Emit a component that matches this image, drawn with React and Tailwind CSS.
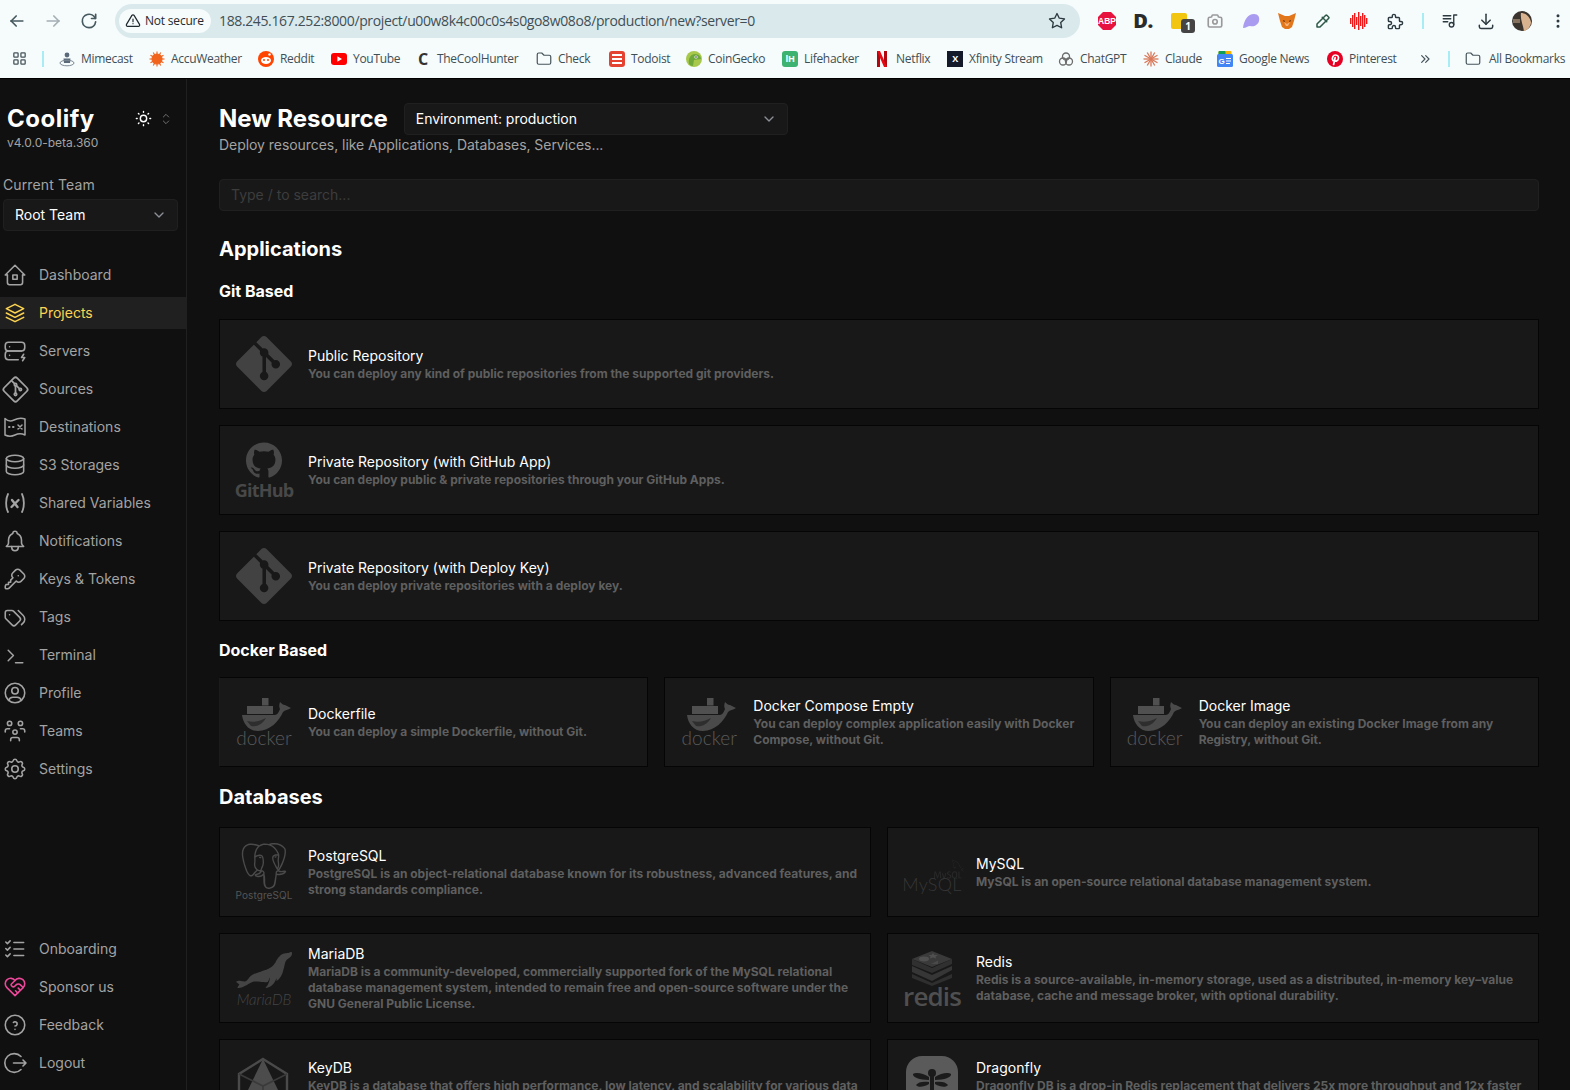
import React from "react";
import {
  TbHome2, TbStack2, TbServerBolt, TbBrandGit, TbDatabase, TbBell, TbKey, TbTags,
  TbTerminal, TbUserCircle, TbUsersGroup, TbSettings, TbListCheck, TbHeartHandshake, TbHelpCircle,
  TbSun, TbSelector, TbChevronDown, TbColorPicker, TbPuzzle, TbPlaylist, TbDownload, TbDotsVertical,
  TbArrowLeft, TbArrowRight, TbReload, TbAlertTriangle, TbStar, TbLayoutGrid, TbFolder, TbChevronsRight, TbCamera,
} from "react-icons/tb";
import { SiGit, SiGithub, SiPostgresql, SiMariadb, SiMysql } from "react-icons/si";

const Logout = () => (
  <svg width="24" height="24" viewBox="0 0 24 24" fill="none" stroke="currentColor" strokeWidth="1.6" strokeLinecap="round" strokeLinejoin="round">
    <path d="M18 5.5A9.4 9.4 0 1 0 18 18.5" />
    <path d="M10.5 12h12.5M20 9l3 3-3 3" />
  </svg>
);
const MapX = () => (
  <svg width="24" height="24" viewBox="0 0 24 24" fill="none" stroke="currentColor" strokeWidth="1.5" strokeLinecap="round" strokeLinejoin="round">
    <path d="M2 3.5C5 6.5 8 6.5 11 5C14 3.5 18 2.5 22 4V20C18 18 15 18.5 12 20C9 21.5 5 21.5 2 20Z" />
    <path d="M15 10l4 4M19 10l-4 4" />
    <path d="M6 12h.5M10 12h.5" strokeWidth="2" />
  </svg>
);
const VarX = () => (
  <svg width="24" height="24" viewBox="0 0 24 24" fill="none" stroke="currentColor" strokeLinecap="round" strokeLinejoin="round">
    <path strokeWidth="1.8" d="M5 3C2.5 8 2.5 16 5 21M19 3C21.5 8 21.5 16 19 21" />
    <path strokeWidth="2.4" d="M9 9L14.5 16M15.5 9L8.5 16" />
  </svg>
);

const navTop = [
  ["Dashboard", TbHome2, 26],
  ["Projects", TbStack2, 26, true],
  ["Servers", TbServerBolt, 26],
  ["Sources", TbBrandGit, 29],
  ["Destinations", MapX, 24],
  ["S3 Storages", TbDatabase, 26],
  ["Shared Variables", VarX, 24],
  ["Notifications", TbBell, 26],
  ["Keys & Tokens", TbKey, 26],
  ["Tags", TbTags, 26],
  ["Terminal", TbTerminal, 25],
  ["Profile", TbUserCircle, 26],
  ["Teams", TbUsersGroup, 26],
  ["Settings", TbSettings, 26],
];

function NavItem({ label, Icon, active, pink, size = 26 }) {
  return (
    <div className={`flex h-8 items-center pl-[3px] text-sm ${active ? "bg-[#202020] text-[#fcd452]" : "text-[#a3a3a3]"}`}>
      <span className={`flex w-6 justify-center overflow-visible ${pink ? "text-[#ec4899]" : ""}`}>
        <span className="shrink-0">
          <Icon size={size} strokeWidth={1.45} />
        </span>
      </span>
      <span className="ml-3">{label}</span>
    </div>
  );
}

const Sidebar = () => (
  <aside className="flex h-full w-[187px] shrink-0 flex-col border-r border-[#202020] bg-[#101010] pb-[11px]">
    <div className="flex items-start justify-between pl-[7px] pr-[12px] pt-[24px]">
      <div>
        <div className="text-2xl leading-8 font-bold tracking-[0.5px] text-white">Coolify</div>
        <div className="text-xs leading-4 text-[#a3a3a3]">v4.0.0-beta.360</div>
      </div>
      <div className="flex items-center gap-[5px] pt-[6px]">
        <TbSun size={19} className="text-white" strokeWidth={1.8} />
        <TbSelector size={16} className="text-[#777]" strokeWidth={1.4} />
      </div>
    </div>
    <div className="mt-[24px] pl-[3px] text-sm leading-5 tracking-[0.12px] text-[#a3a3a3]">Current Team</div>
    <div className="mx-[3px] mt-[4px] flex h-8 w-[175px] items-center justify-between rounded border border-[#202020] bg-[#181818] pl-[11px] pr-[10px] text-sm text-white">
      <span>Root Team</span>
      <TbChevronDown size={16} className="text-[#8a8f98]" strokeWidth={2} />
    </div>
    <nav className="mt-[28px] flex flex-col gap-[6px]">
      {navTop.map(([l, I, s, a]) => <NavItem key={l} label={l} Icon={I} size={s} active={a} />)}
    </nav>
    <nav className="mt-auto flex flex-col gap-[6px]">
      <NavItem label="Onboarding" Icon={TbListCheck} />
      <NavItem label="Sponsor us" Icon={TbHeartHandshake} pink />
      <NavItem label="Feedback" Icon={TbHelpCircle} />
      <NavItem label="Logout" Icon={Logout} size={24} />
    </nav>
  </aside>
);

const GitLogo = () => <SiGit size={56} className="text-[#424242]" />;
const GithubLogo = () => (
  <div className="flex flex-col items-center text-[#484848]">
    <SiGithub size={36} />
    <span className="mt-[3px] text-[18px] leading-[18px] font-bold tracking-[-0.8px] font-[family-name:'Open_Sans',sans-serif]">GitHub</span>
  </div>
);
const DockerLogo = () => (
  <div className="flex h-14 flex-col items-center">
    <svg width="56" height="37" viewBox="0 0 56 37" className="shrink-0">
      <g fill="#505050">
        <rect x="26" y="4" width="6.5" height="7.5" />
        <rect x="11" y="12" width="26" height="8" />
      </g>
      <path fill="#4a4a4a" d="M6 21H39C41 21 43 18 44 15C43 13 43 11 44 8C46 10 47 11 49 11L55 14C52 16 49 16 47 18C43 27 34 37 22 37C12 37 7 29 6 21Z" />
      <path fill="#2e2e2e" d="M11 27C18 29 24 27 30 24C26 31 20 33 15 32Z" />
    </svg>
    <span className="mt-[-1px] text-[19px] leading-[16px] font-light tracking-[0.1px] text-[#5a5a5a] font-[family-name:Lato,sans-serif]">docker</span>
  </div>
);
const PgLogo = () => (
  <div className="flex flex-col items-center">
    <SiPostgresql size={46} className="text-[#4a4a4a]" />
    <span className="text-[10px] leading-[12px] tracking-[0.1px] text-[#555]">PostgreSQL</span>
  </div>
);
const MysqlLogo = () => (
  <div className="mt-[4px] flex flex-col items-center">
    <SiMysql size={30} className="mb-[-10px] ml-[34px] text-[#282828]" />
    <span className="text-[18px] leading-[18px] font-light tracking-[0.3px] text-[#363636] font-[family-name:Lato,sans-serif]">MySQL</span>
  </div>
);
const MariaLogo = () => (
  <div className="flex flex-col items-center">
    <SiMariadb size={56} className="my-[-8px] text-[#444]" />
    <span className="mt-[2px] text-[15px] leading-[14px] font-light italic text-[#454545] font-[family-name:Lato,sans-serif]">MariaDB</span>
  </div>
);
const RedisLogo = () => (
  <div className="flex h-14 flex-col items-center">
    <svg width="42" height="36" viewBox="0 0 42 36" className="shrink-0">
      <path fill="#2f2f2f" d="M1 24L21 33L41 24V28L21 36L1 28Z" />
      <path fill="#363636" d="M1 16L21 25L41 16V20L21 31L1 22Z" />
      <path fill="#303030" d="M1 9L21 18L41 9V14L21 23L1 15Z" />
      <path fill="#3a3a3a" d="M21 1L41 9L21 17L1 9Z" />
      <ellipse cx="13" cy="9" rx="5" ry="2.4" fill="#505050" />
      <path fill="#505050" d="M22 3L23.5 5H27L24.5 6.5L25 8.5L22 7.5L19 8.5L19.5 6.5L17.5 5H20.5Z" />
      <path fill="#4a4a4a" d="M20 14L27 10.5L27 14Z" />
    </svg>
    <span className="text-[26px] leading-[20px] font-semibold tracking-[-0.9px] text-[#4f4f4f] font-[family-name:'Open_Sans',sans-serif]">redis</span>
  </div>
);
const KeyLogo = () => (
  <svg width="56" height="56" viewBox="0 0 56 56">
    <path fill="none" stroke="#4a4a4a" strokeWidth="2.4" d="M27 3L51 18V44L27 55L3 44V18Z" />
    <path fill="#4c4c4c" d="M27 3L43 36L27 46L11 36Z" />
    <path fill="none" stroke="#3a3a3a" strokeWidth="1.6" d="M3 18L27 30L51 18M27 30V55" />
  </svg>
);
const DragonLogo = () => (
  <div className="flex h-14 w-[52px] items-center justify-center rounded-[16px] bg-[#5a5a5a]">
    <svg width="40" height="30" viewBox="0 0 40 30" fill="#1b1b1b">
      <circle cx="20" cy="4" r="4" />
      <rect x="18" y="6" width="4" height="24" rx="2" />
      <path d="M17 8C11 4 4 3 1 5C0 8 8 11 17 11Z" />
      <path d="M23 8C29 4 36 3 39 5C40 8 32 11 23 11Z" />
      <path d="M17 13C11 12 6 13 4 16C6 19 12 18 17 15Z" />
      <path d="M23 13C29 12 34 13 36 16C34 19 28 18 23 15Z" />
    </svg>
  </div>
);

function Card({ logo, title, desc, className = "" }) {
  return (
    <div className={`flex h-[90px] items-center gap-4 border border-[#050505] bg-[#181818] pl-4 pr-2 ${className}`}>
      <div className="flex h-14 w-14 shrink-0 items-center justify-center">{logo}</div>
      <div className="min-w-0">
        <div className="text-sm leading-5 text-white">{title}</div>
        <div className="text-xs leading-4 font-bold text-[#5f5f5f]">{desc}</div>
      </div>
    </div>
  );
}

const Main = () => (
  <main className="h-full min-w-0 flex-1 overflow-hidden bg-[#101010] pl-8 pr-[31px] pt-6">
    <div className="flex items-center gap-4">
      <h1 className="text-2xl font-bold text-white">New Resource</h1>
      <div className="flex h-8 w-[384px] items-center justify-between rounded border border-[#202020] bg-[#181818] pl-[11px] pr-[10px] text-sm tracking-[-0.05px] text-white">
        <span>Environment: production</span>
        <TbChevronDown size={16} className="text-[#8a8f98]" strokeWidth={2} />
      </div>
    </div>
    <p className="text-sm leading-5 tracking-[-0.05px] text-[#a3a3a3]">Deploy resources, like Applications, Databases, Services...</p>
    <div className="mt-6 flex h-8 items-center rounded border border-[#202020] bg-[#181818] pl-[11px] text-sm text-[#3d3d3d]">Type / to search...</div>
    <h2 className="mt-[24px] text-xl leading-7 font-bold text-white">Applications</h2>
    <h3 className="mt-[16px] text-base leading-6 font-bold text-white">Git Based</h3>
    <div className="mt-[16px] flex flex-col gap-4">
      <Card logo={<GitLogo />} title="Public Repository" desc="You can deploy any kind of public repositories from the supported git providers." />
      <Card logo={<GithubLogo />} title="Private Repository (with GitHub App)" desc="You can deploy public & private repositories through your GitHub Apps." />
      <Card logo={<GitLogo />} title="Private Repository (with Deploy Key)" desc="You can deploy private repositories with a deploy key." />
    </div>
    <h3 className="mt-[17px] text-base leading-6 font-bold text-white">Docker Based</h3>
    <div className="mt-[15px] grid grid-cols-3 gap-4">
      <Card className="border-l-[#1a1440]" logo={<DockerLogo />} title="Dockerfile" desc="You can deploy a simple Dockerfile, without Git." />
      <Card logo={<DockerLogo />} title="Docker Compose Empty" desc="You can deploy complex application easily with Docker Compose, without Git." />
      <Card logo={<DockerLogo />} title="Docker Image" desc="You can deploy an existing Docker Image from any Registry, without Git." />
    </div>
    <h2 className="mt-[16px] text-xl leading-7 font-bold text-white">Databases</h2>
    <div className="mt-[16px] grid grid-cols-2 gap-4">
      <Card logo={<PgLogo />} title="PostgreSQL" desc="PostgreSQL is an object-relational database known for its robustness, advanced features, and strong standards compliance." />
      <Card logo={<MysqlLogo />} title="MySQL" desc="MySQL is an open-source relational database management system." />
      <Card logo={<MariaLogo />} title="MariaDB" desc="MariaDB is a community-developed, commercially supported fork of the MySQL relational database management system, intended to remain free and open-source software under the GNU General Public License." />
      <Card logo={<RedisLogo />} title="Redis" desc="Redis is a source-available, in-memory storage, used as a distributed, in-memory key–value database, cache and message broker, with optional durability." />
      <Card logo={<KeyLogo />} title="KeyDB" desc="KeyDB is a database that offers high performance, low latency, and scalability for various data structures and workloads." />
      <Card logo={<DragonLogo />} title="Dragonfly" desc="Dragonfly DB is a drop-in Redis replacement that delivers 25x more throughput and 12x faster snapshotting than Redis." />
    </div>
  </main>
);

/* ---------- browser chrome ---------- */
const Ext = ({ children }) => <div className="relative flex h-6 w-9 items-center justify-center">{children}</div>;

const Abp = () => (
  <svg width="20" height="20" viewBox="0 0 20 20">
    <path fill="#e8123f" d="M6 1H14L19 6V14L14 19H6L1 14V6Z" />
    <text x="10" y="13.2" textAnchor="middle" fontSize="8.5" fontWeight="700" fill="#fff" fontFamily="Liberation Sans">ABP</text>
  </svg>
);
const Ghost = () => (
  <svg width="18" height="16" viewBox="0 0 18 16"><path fill="#a99bf0" d="M1 15C2 7 6 1 12 1C16 1 18 4 17 8C16 12 12 14 8 13C6 13 4 15 1 15Z" /></svg>
);
const Fox = () => (
  <svg width="18" height="16" viewBox="0 0 18 16">
    <path fill="#e2761b" d="M0 0L7 3H11L18 0L16 8L14 14L11 16H7L4 14L2 8Z" />
    <path fill="#f6b27a" d="M6 9L8 13H10L12 9L9 11Z" />
    <path fill="#2e1b0f" d="M5 7L7 8L6 9ZM13 7L11 8L12 9Z" />
  </svg>
);
const Wave = () => (
  <svg width="18" height="18" viewBox="0 0 18 18" fill="#f01818">
    {[[0,6,6],[2,3,12],[4,1,16],[6,5,8],[8,0,18],[10,4,10],[12,1,16],[14,3,12],[16,6,6]].map(([x,y,h]) => <rect key={x} x={x} y={y} width="1.4" height={h} />)}
  </svg>
);
const Avatar = () => (
  <svg width="20" height="20" viewBox="0 0 20 20">
    <circle cx="10" cy="10" r="10" fill="#3a332e" />
    <path fill="#d9b38f" d="M9 2C14 2 18 6 19 11C19 15 16 19 12 20C11 14 8 8 9 2Z" />
    <path fill="#86715e" d="M1 8H8V12H1Z" />
  </svg>
);

const Mk = ({ c, children, r = "rounded-[3px]", t = "text-white" }) => (
  <div className={`flex h-4 w-4 items-center justify-center text-[9px] leading-none font-bold ${c} ${r} ${t}`}>{children}</div>
);
const Mime = () => (
  <svg width="16" height="16" viewBox="0 0 16 16" fill="none">
    <circle cx="8" cy="4" r="2.4" fill="#5b6a78" /><path fill="#5b6a78" d="M4.5 7.5H11.5L11 12H5Z" />
    <ellipse cx="8" cy="12" rx="7" ry="2.8" stroke="#7d8a96" strokeWidth="1" />
  </svg>
);
const Sunburst = ({ color, size = 16 }) => (
  <svg width={size} height={size} viewBox="0 0 16 16" stroke={color} strokeWidth="1.3">
    {[0, 30, 60, 90, 120, 150].map((a) => <line key={a} x1="8" y1="0.5" x2="8" y2="15.5" transform={`rotate(${a} 8 8)`} />)}
  </svg>
);
const Accu = () => (
  <svg width="16" height="16" viewBox="0 0 16 16" stroke="#f0641e" strokeWidth="1.1">
    {[0, 30, 60, 90, 120, 150].map((a) => <line key={a} x1="8" y1="0.5" x2="8" y2="15.5" transform={`rotate(${a} 8 8)`} />)}
    <circle cx="8" cy="8" r="5" fill="#f0641e" />
  </svg>
);
const Yt = () => (
  <svg width="16" height="12" viewBox="0 0 16 12"><rect width="16" height="12" rx="3" fill="#f00" /><path fill="#fff" d="M6.4 3.2L11 6L6.4 8.8Z" /></svg>
);
const Reddit = () => (
  <svg width="16" height="16" viewBox="0 0 16 16">
    <circle cx="8" cy="8" r="8" fill="#ff4500" /><ellipse cx="8" cy="9.5" rx="5" ry="3.4" fill="#fff" />
    <circle cx="6" cy="9" r="1" fill="#ff4500" /><circle cx="10" cy="9" r="1" fill="#ff4500" />
    <circle cx="11.5" cy="3.5" r="1.2" fill="#fff" />
  </svg>
);
const Gecko = () => (
  <svg width="16" height="16" viewBox="0 0 16 16">
    <circle cx="8" cy="8" r="8" fill="#a8c84c" /><path fill="#6fa83a" d="M3 13C2 7 5 3 9 3C13 3 15 6 15 8L8 9L7 15C5 15 4 14 3 13Z" />
    <circle cx="10" cy="6" r="1.6" fill="#fff" /><circle cx="10" cy="6" r="0.8" fill="#222" />
  </svg>
);
const Netflix = () => (
  <svg width="10" height="16" viewBox="0 0 10 16"><path fill="#b20710" d="M0 0H3V16L0 16ZM7 0H10V16L7 16Z" /><path fill="#e50914" d="M0 0H3L10 16H7Z" /></svg>
);
const Gpt = () => (
  <svg width="16" height="16" viewBox="0 0 16 16" fill="none" stroke="#6b6b6b" strokeWidth="1.3"><circle cx="8" cy="5.5" r="3.5" /><circle cx="5" cy="10.5" r="3.5" /><circle cx="11" cy="10.5" r="3.5" /></svg>
);
const GNews = () => (
  <svg width="16" height="16" viewBox="0 0 16 16">
    <rect x="1.5" y="0" width="13" height="6" rx="1" fill="#f4b400" /><rect x="1.5" y="0" width="7" height="6" rx="1" fill="#0f9d58" />
    <rect x="0" y="3" width="16" height="13" rx="1.5" fill="#4285f4" />
    <text x="4.5" y="12.5" textAnchor="middle" fontSize="8" fontWeight="700" fill="#fff" fontFamily="Liberation Sans">G</text>
    <path stroke="#fff" strokeWidth="1.2" d="M9 7.5H14M9 10H14M9 12.5H13" />
  </svg>
);
const Pin = () => (
  <svg width="16" height="16" viewBox="0 0 16 16">
    <circle cx="8" cy="8" r="8" fill="#e60023" />
    <path fill="none" stroke="#fff" strokeWidth="1.7" strokeLinecap="round" d="M6 9.5C4.5 7 6 4 8.5 4C11 4 12 6 11.3 8C10.7 10 8.8 10.5 8 9.5M8.2 6.5L6.6 13.5" />
  </svg>
);
const Todoist = () => (
  <div className="flex h-4 w-4 flex-col items-center justify-center gap-[2px] rounded-[3px] bg-[#e44332]">
    <div className="h-[2px] w-[10px] bg-white" /><div className="h-[2px] w-[10px] bg-white" /><div className="h-[2px] w-[10px] bg-white" />
  </div>
);

const bookmarks = [
  ["Mimecast", <Mime />, "w-[90px]"],
  ["AccuWeather", <Accu />, "w-[109px]"],
  ["Reddit", <Reddit />, "w-[73px]"],
  ["YouTube", <Yt />, "w-[84px]"],
  ["TheCoolHunter", <span className="w-4 text-center text-[16px] leading-4 font-bold text-[#333]">C</span>, "w-[121px]"],
  ["Check", <TbFolder size={18} strokeWidth={1.6} className="shrink-0 text-[#45545a]" />, "w-[73px]"],
  ["Todoist", <Todoist />, "w-[77px]"],
  ["CoinGecko", <Gecko />, "w-[96px]"],
  ["Lifehacker", <Mk c="bg-[#3cb371]">lH</Mk>, "w-[92px]"],
  ["Netflix", <span className="flex w-4 justify-center"><Netflix /></span>, "w-[73px]"],
  ["Xfinity Stream", <Mk c="bg-[#141a2a]" r="rounded-none">X</Mk>, "w-[111px]"],
  ["ChatGPT", <Gpt />, "w-[85px]"],
  ["Claude", <Sunburst color="#d97757" />, "w-[74px]"],
  ["Google News", <GNews />, "w-[110px]"],
  ["Pinterest", <Pin />, "w-[90px]"],
];

const Chrome = () => (
  <header className="h-[79px] shrink-0 border-b border-black bg-[#f6fbfc] text-[#3f4f55] font-[family-name:'Open_Sans',sans-serif]">
    <div className="flex h-[42px] items-center pt-[0px]">
      <div className="flex w-[107px] shrink-0 items-center gap-[16px] pl-[7px]">
        <TbArrowLeft size={20} strokeWidth={2} className="text-[#45595f]" />
        <TbArrowRight size={20} strokeWidth={2} className="text-[#a4b0b4]" />
        <TbReload size={20} strokeWidth={2} className="text-[#45595f]" />
      </div>
      <div className="ml-[8px] flex h-[34px] w-[965px] shrink-0 items-center rounded-full bg-[#dae9ec] pl-1 pr-[14px]">
        <div className="flex h-6 w-[92px] items-center gap-[4px] rounded-full bg-[#f6fbfc] pl-[6px] text-xs tracking-[-0.2px] text-[#1f2a2e]">
          <TbAlertTriangle size={16} strokeWidth={1.8} /><span>Not secure</span>
        </div>
        <span className="ml-2 text-sm tracking-[-0.37px] text-[#3f4f55]">188.245.167.252:8000/project/u00w8k4c00c0s4s0go8w08o8/production/new?server=0</span>
        <TbStar size={18} strokeWidth={1.8} className="ml-auto text-[#2c3a40]" />
      </div>
      <div className="ml-[9px] flex items-center">
        <Ext><Abp /></Ext>
        <Ext><span className="text-[20px] leading-none font-extrabold tracking-[-0.5px] text-[#2b2b2b]">D.</span></Ext>
        <Ext>
          <div className="h-4 w-4 rounded-[2px] bg-[#f2c511]" />
          <span className="absolute right-[2px] top-[10px] flex h-[14px] w-[14px] items-center justify-center rounded-[3px] bg-[#444] text-[10px] font-bold text-white">1</span>
        </Ext>
        <Ext><TbCamera size={18} strokeWidth={2.2} className="text-[#9a9a9a]" /></Ext>
        <Ext><Ghost /></Ext>
        <Ext><Fox /></Ext>
        <Ext><TbColorPicker size={18} strokeWidth={2} className="text-[#2e5a48]" /></Ext>
        <Ext><Wave /></Ext>
        <Ext><TbPuzzle size={19} strokeWidth={1.8} className="text-[#2c3a40]" /></Ext>
        <div className="ml-[9px] h-4 w-[2px] bg-[#a8ecf5]" />
        <div className="ml-[8px] flex">
          <Ext><TbPlaylist size={18} strokeWidth={1.8} className="text-[#2c3a40]" /></Ext>
          <Ext><TbDownload size={20} strokeWidth={1.8} className="text-[#2c3a40]" /></Ext>
          <Ext><Avatar /></Ext>
          <Ext><TbDotsVertical size={18} strokeWidth={2} className="text-[#2c3a40]" /></Ext>
        </div>
      </div>
    </div>
    <div className="flex h-[36px] items-center pb-[3px] text-xs tracking-[-0.3px]">
      <TbLayoutGrid size={17} strokeWidth={1.8} className="ml-[11px] shrink-0 text-[#45545a]" />
      <div className="ml-[14px] h-4 w-[2px] shrink-0 bg-[#a8ecf5]" />
      <div className="ml-[15px] flex items-center">
        {bookmarks.map(([l, ic, w]) => (
          <div key={l} className={`flex shrink-0 items-center gap-[6px] whitespace-nowrap ${w}`}>
            <span className="flex w-4 justify-center">{ic}</span>
            <span>{l}</span>
          </div>
        ))}
      </div>
      <TbChevronsRight size={16} strokeWidth={1.8} className="shrink-0 text-[#45545a]" />
      <div className="ml-[15px] h-4 w-[2px] shrink-0 bg-[#a8ecf5]" />
      <div className="ml-[14px] flex shrink-0 items-center gap-[7px] whitespace-nowrap">
        <TbFolder size={18} strokeWidth={1.6} className="text-[#45545a]" />
        <span>All Bookmarks</span>
      </div>
    </div>
  </header>
);

export default function App() {
  return (
    <div className="flex h-[1090px] w-[1570px] flex-col overflow-hidden bg-[#101010] font-[family-name:Inter,sans-serif]">
      <Chrome />
      <div className="flex min-h-0 flex-1">
        <Sidebar />
        <Main />
      </div>
    </div>
  );
}
